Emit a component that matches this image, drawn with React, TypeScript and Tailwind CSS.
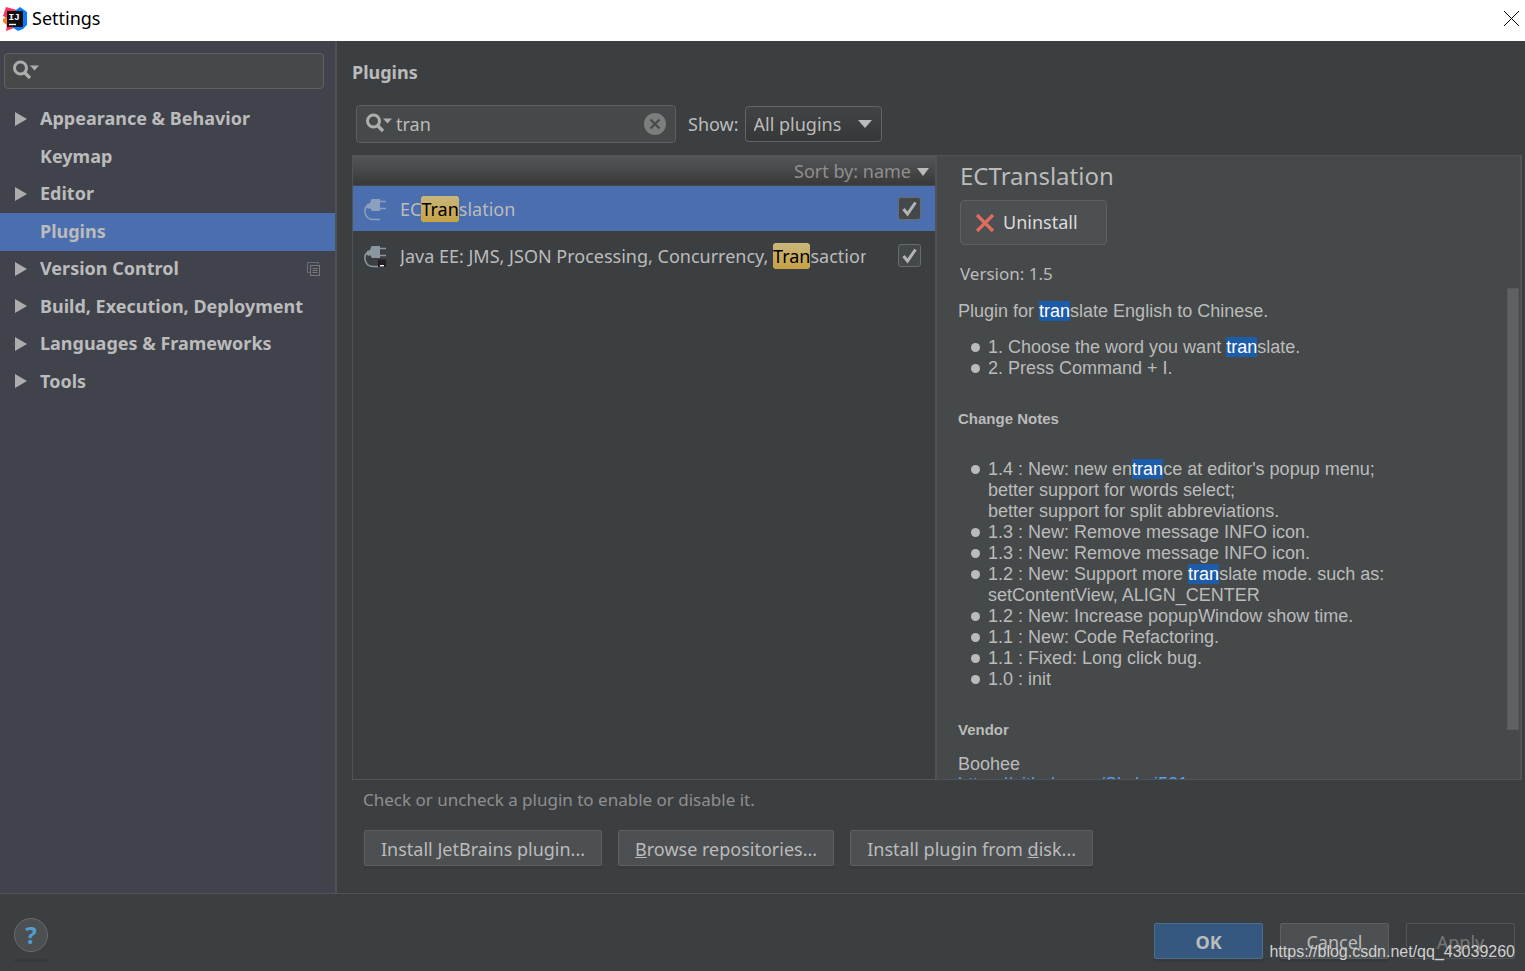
import { useState } from "react";
import type { ReactNode } from "react";

type Category = {
  label: string;
  expandable: boolean;
  projectLevel?: boolean;
};

const categories: Category[] = [
  { label: "Appearance & Behavior", expandable: true },
  { label: "Keymap", expandable: false },
  { label: "Editor", expandable: true },
  { label: "Plugins", expandable: false },
  { label: "Version Control", expandable: true, projectLevel: true },
  { label: "Build, Execution, Deployment", expandable: true },
  { label: "Languages & Frameworks", expandable: true },
  { label: "Tools", expandable: true },
];

function IdeaLogo() {
  return (
    <svg viewBox="0 0 24 24" className="h-6 w-6" aria-hidden="true">
      <path d="M0 12 L3 10 L7 13 L5 19 L0 15 Z" fill="#fc801d" />
      <path d="M3 0 L14 3 L12 12 L4 11 L0 9 Z" fill="#fe315d" />
      <path d="M4 17 L12 18 L11 21 L3 24 Z" fill="#fe315d" />
      <path d="M13 3 L17 0 L24 5 V18 L20 22 L15 24 L9 20 Z" fill="#087cfa" />
      <rect x="4" y="4" width="16" height="16" fill="#111" />
      <text
        x="5.4"
        y="13"
        fill="#fff"
        fontFamily="Liberation Mono, monospace"
        fontWeight="700"
        fontSize="9.5"
      >
        IJ
      </text>
      <rect x="6" y="16.8" width="7" height="1.4" fill="#fff" />
    </svg>
  );
}

function SearchIcon() {
  return (
    <svg viewBox="0 0 28 20" className="mb-0.5 h-5 w-7 shrink-0" aria-hidden="true">
      <circle cx="8.5" cy="8" r="6" fill="none" stroke="#adadad" strokeWidth="3" />
      <path d="M12.5 12.5 L18 18" stroke="#adadad" strokeWidth="3.4" />
      <path d="M18 5.5 H27 L22.5 10.5 Z" fill="#adadad" />
    </svg>
  );
}

function PlugIcon({ dimmed = false, badge = false }: { dimmed?: boolean; badge?: boolean }) {
  const color = dimmed ? "#8c9fbc" : "#8b979e";

  return (
    <svg viewBox="0 0 24 24" className="h-6 w-6 shrink-0" aria-hidden="true">
      <path d="M8 3 L9 2 H17 V14 H9 L7 11 L6 12 L4 11 V7 L7 6 Z" fill={color} />
      <path d="M17 4.5h6M17 11.5h6" stroke={color} strokeWidth="1.4" />
      <path
        d="M6 7.5 C1.5 9.5 1 14.5 3 18.5 Q5 22.5 10 22.5 H17"
        fill="none"
        stroke={color}
        strokeWidth="1.6"
      />
      {badge && (
        <>
          <rect x="15" y="15.5" width="8" height="7.5" fill="#231f20" />
          <rect x="17" y="21" width="4" height="1.4" fill="#fff" />
        </>
      )}
    </svg>
  );
}

function Match({ children }: { children: ReactNode }) {
  return (
    <mark className="rounded-sm bg-linear-to-b from-[#c9b67c] to-[#c6a244] py-px text-black">
      {children}
    </mark>
  );
}

function Found({ children }: { children: ReactNode }) {
  return <mark className="bg-[#1d5ca9] text-white">{children}</mark>;
}

function Item({ children }: { children: ReactNode }) {
  return (
    <li className="flex">
      <span className="mt-1.5 mr-2 h-[9px] w-[9px] shrink-0 rounded-full bg-[#bbbbbb]" />
      <span>{children}</span>
    </li>
  );
}

function PluginRow({
  name,
  selected = false,
  badge = false,
  children,
}: {
  name: string;
  selected?: boolean;
  badge?: boolean;
  children: ReactNode;
}) {
  const [enabled, setEnabled] = useState(true);

  return (
    <li className={`flex h-[45px] items-center pr-3.5 pl-2.5 ${selected ? "bg-[#4b6eaf]" : ""}`}>
      <PlugIcon dimmed={selected} badge={badge} />
      <span className="mr-8 ml-[13px] flex-1 overflow-hidden leading-7 whitespace-nowrap">
        {children}
      </span>
      <span className="relative flex">
        <input
          type="checkbox"
          aria-label={`Enable ${name}`}
          checked={enabled}
          onChange={() => setEnabled(!enabled)}
          className="h-[23px] w-[23px] appearance-none rounded-[3px] border border-[#6b6b6b] bg-[#43484a]"
        />
        {enabled && (
          <svg viewBox="0 0 23 23" className="pointer-events-none absolute inset-0" aria-hidden="true">
            <path d="M5.5 12 L9.5 17 L17.5 5.5" fill="none" stroke="#b4b4b4" strokeWidth="3" />
          </svg>
        )}
      </span>
    </li>
  );
}

function Button({ children }: { children: ReactNode }) {
  return (
    <button
      type="button"
      className="h-9 rounded-xs border border-[#5e6060] bg-[#4c5052] px-4 pt-0.5 shadow-[0_3px_0_#37393a]"
    >
      {children}
    </button>
  );
}

function Sidebar() {
  return (
    <nav className="w-[337px] shrink-0 border-r-2 border-[#505152] bg-[#40434c]">
      <label className="mt-3 mr-[11px] ml-1 flex h-9 items-center rounded-sm border border-[#5d6161] bg-[#45494a] pl-[7px]">
        <SearchIcon />
        <input type="text" aria-label="Search settings" className="min-w-0 flex-1 outline-none" />
      </label>
      <ul className="mt-3 font-bold">
        {categories.map((item) => (
          <li
            key={item.label}
            className={`flex items-center px-3.5 pb-0.5 odd:h-[37px] even:h-[38px] ${
              item.label === "Plugins" ? "bg-[#4b6eaf]" : ""
            }`}
          >
            <span className="w-[26px]">
              {item.expandable && (
                <svg viewBox="0 0 14 14" className="h-3.5 w-3.5" aria-hidden="true">
                  <path d="M1 0 L13 7 L1 14 Z" fill="#adadad" />
                </svg>
              )}
            </span>
            <span className="flex-1">{item.label}</span>
            {item.projectLevel && (
              <svg viewBox="0 0 14 14" className="h-3.5 w-3.5" aria-hidden="true">
                <path d="M2.5 10.5 H0.5 V0.5 H11.5 V2" fill="none" stroke="#687078" />
                <rect x="3.5" y="3.5" width="9" height="10" fill="none" stroke="#777" />
                <path d="M5.5 6.5h5M5.5 10.5h5M5.5 8.5h5" stroke="#777" />
              </svg>
            )}
          </li>
        ))}
      </ul>
    </nav>
  );
}

function PluginList() {
  return (
    <div className="flex min-w-0 flex-col border-l border-[#515354]">
      <div className="flex h-[30px] items-center justify-end border-b border-[#47494a] bg-linear-to-b from-[#53575a] to-[#393939] pt-0.5 pr-1.5 text-[#8f8f8f]">
        <button type="button" className="flex items-center gap-1.5">
          Sort by: name
          <svg viewBox="0 0 12 8" className="h-2 w-3" aria-hidden="true">
            <path d="M0 0 H12 L6 8 Z" fill="#bbb" />
          </svg>
        </button>
      </div>
      <ul className="flex flex-col gap-0.5">
        <PluginRow name="ECTranslation" selected>
          EC<Match>Tran</Match>slation
        </PluginRow>
        <PluginRow name="Java EE" badge>
          Java EE: JMS, JSON Processing, Concurrency, <Match>Tran</Match>sactions
        </PluginRow>
      </ul>
    </div>
  );
}

function PluginDetails() {
  return (
    <section className="flex min-w-0 flex-col border-x-2 border-[#515354] bg-[#45494a]">
      <div className="px-[23px]">
        <h2 className="text-2xl leading-10">ECTranslation</h2>
        <button
          type="button"
          className="mt-1 flex h-[45px] items-center gap-2 rounded-sm border border-[#5d6061] bg-[#4c5052] pr-7 pl-3.5 text-[#dcdcdc]"
        >
          <svg viewBox="0 0 20 20" className="h-5 w-5" aria-hidden="true">
            <path d="M2 2 L18 18 M18 2 L2 18" stroke="#e06c5e" strokeWidth="3.2" />
          </svg>
          Uninstall
        </button>
        <p className="mt-[15px] text-[17px] leading-7">Version: 1.5</p>
      </div>
      <div className="flex min-h-0 flex-1">
        <div className="flex-1 overflow-hidden pl-[21px] font-['Liberation_Sans',Arial,sans-serif] text-[18px] leading-[21px]">
          <p className="mt-[13px]">
            Plugin for <Found>tran</Found>slate English to Chinese.
          </p>
          <ul className="mt-[15px] pl-[13px]">
            <Item>
              1. Choose the word you want <Found>tran</Found>slate.
            </Item>
            <Item>2. Press Command + I.</Item>
          </ul>
          <h3 className="mt-[29px] text-[15px] font-bold">Change Notes</h3>
          <ul className="mt-[30px] pl-[13px]">
            <Item>
              1.4 : New: new en<Found>tran</Found>ce at editor's popup menu;
              <br />
              better support for words select;
              <br />
              better support for split abbreviations.
            </Item>
            <Item>1.3 : New: Remove message INFO icon.</Item>
            <Item>1.3 : New: Remove message INFO icon.</Item>
            <Item>
              1.2 : New: Support more <Found>tran</Found>slate mode. such as:
              <br />
              setContentView, ALIGN_CENTER
            </Item>
            <Item>1.2 : New: Increase popupWindow show time.</Item>
            <Item>1.1 : New: Code Refactoring.</Item>
            <Item>1.1 : Fixed: Long click bug.</Item>
            <Item>1.0 : init</Item>
          </ul>
          <h3 className="mt-[29px] text-[15px] font-bold">Vendor</h3>
          <p className="mt-3.5 leading-5">
            Boohee
            <br />
            <a href="https://github.com/Skykai521" className="text-[#589df6] underline">
              https://github.com/Skykai521
            </a>
          </p>
        </div>
        <div className="mr-px w-3">
          <div className="h-[90%] border border-[#565a5b] bg-[#5f6263]" />
        </div>
      </div>
    </section>
  );
}

export default function App() {
  const [query, setQuery] = useState("tran");

  return (
    <div className="relative flex h-screen flex-col overflow-hidden bg-[#3c3f41] font-['Noto_Sans','Open_Sans',sans-serif] text-[18px] text-[#bbbbbb]">
      <header className="flex h-[41px] shrink-0 items-center bg-white pr-1.5 pb-1 pl-[3px] text-black">
        <IdeaLogo />
        <h1 className="ml-[5px] flex-1">Settings</h1>
        <button type="button" aria-label="Close">
          <svg viewBox="0 0 15 15" className="h-[15px] w-[15px]" aria-hidden="true">
            <path d="M0 0 L15 15 M15 0 L0 15" stroke="#000" />
          </svg>
        </button>
      </header>

      <div className="flex min-h-0 flex-1">
        <Sidebar />
        <main className="flex min-w-0 flex-1 flex-col pr-[3px] pl-[15px]">
          <h2 className="mt-[15px] leading-8 font-bold">Plugins</h2>
          <div className="mt-[17px] ml-1 flex h-[38px] items-center">
            <label className="flex h-full w-80 items-center rounded-sm border border-[#5d6161] bg-[#45494a] pr-[9px] pl-2">
              <SearchIcon />
              <input
                type="text"
                aria-label="Search plugins"
                value={query}
                onChange={(e) => setQuery(e.target.value)}
                className="ml-[3px] min-w-0 flex-1 outline-none"
              />
              <svg viewBox="0 0 22 22" className="h-[22px] w-[22px]" aria-hidden="true">
                <circle cx="11" cy="11" r="11" fill="#7d7d7d" />
                <path d="M6.5 6.5 L15.5 15.5 M15.5 6.5 L6.5 15.5" stroke="#45494a" strokeWidth="2.2" />
              </svg>
            </label>
            <label htmlFor="show" className="ml-3">
              Show:
            </label>
            <span className="relative ml-1.5 flex items-center">
              <select
                id="show"
                className="h-9 w-[137px] appearance-none rounded-sm border border-[#646464] bg-linear-to-b from-[#414445] to-[#363738] pl-2 outline-none"
              >
                <option>All plugins</option>
                <option>Enabled</option>
                <option>Disabled</option>
              </select>
              <svg
                viewBox="0 0 14 8"
                className="pointer-events-none absolute right-2.5 h-2 w-3.5"
                aria-hidden="true"
              >
                <path d="M0 0 H14 L7 8 Z" fill="#bbb" />
              </svg>
            </span>
          </div>

          <div className="mt-3 grid min-h-0 flex-1 grid-cols-[583fr_587fr] grid-rows-[minmax(0,1fr)] border-y border-[#515354]">
            <PluginList />
            <PluginDetails />
          </div>

          <p className="ml-[11px] h-[50px] pt-2 text-[17px] leading-6 text-[#8f8f8f]">
            Check or uncheck a plugin to enable or disable it.
          </p>
          <div className="mb-[27px] ml-3 flex gap-4">
            <Button>
              Install <u>J</u>etBrains plugin...
            </Button>
            <Button>
              <u>B</u>rowse repositories...
            </Button>
            <Button>
              Install plugin from <u>d</u>isk...
            </Button>
          </div>
        </main>
      </div>

      <footer className="flex h-[78px] shrink-0 border-t border-[#515354] pr-2.5 pl-3.5">
        <div className="mt-6">
          <button
            type="button"
            aria-label="Help"
            className="block h-[34px] w-[34px] rounded-full border border-[#686a6b] bg-[#4c5052] text-2xl leading-8 font-bold text-[#4f9fd0]"
          >
            ?
          </button>
          <div className="mt-[7px] h-[3px] bg-[#37393a]" />
        </div>
        <div className="mt-[29px] ml-auto flex gap-[17px]">
          <button
            type="button"
            className="h-9 w-[109px] rounded-xs border border-[#4c708c] bg-[#365880] pt-0.5 font-bold shadow-[0_3px_0_#37393a]"
          >
            OK
          </button>
          <button
            type="button"
            className="h-9 w-[109px] rounded-xs border border-[#5e6060] bg-[#4c5052] pt-0.5 shadow-[0_3px_0_#37393a]"
          >
            Cancel
          </button>
          <button
            type="button"
            disabled
            className="h-9 w-[109px] rounded-xs border border-[#535556] pt-0.5 text-[#777777]"
          >
            Apply
          </button>
        </div>
      </footer>

      <span className="pointer-events-none absolute right-2.5 bottom-[7px] font-['Liberation_Sans',Arial,sans-serif] text-base text-[#d0d0d0]">
        https://blog.csdn.net/qq_43039260
      </span>
    </div>
  );
}
